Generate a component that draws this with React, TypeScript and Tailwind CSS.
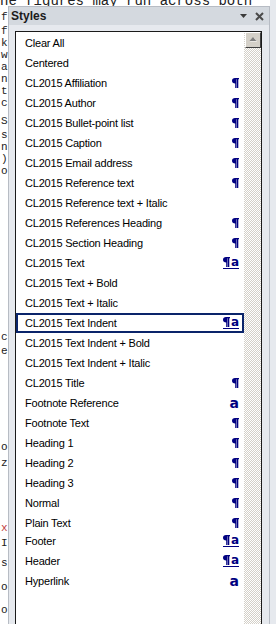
import React from "react";

type Row = { name: string; icon?: "p" | "pa" | "a"; selected?: boolean; tight?: boolean };

const rows: Row[] = [
  { name: "Clear All" },
  { name: "Centered" },
  { name: "CL2015 Affiliation", icon: "p" },
  { name: "CL2015 Author", icon: "p" },
  { name: "CL2015 Bullet-point list", icon: "p" },
  { name: "CL2015 Caption", icon: "p" },
  { name: "CL2015 Email address", icon: "p" },
  { name: "CL2015 Reference text", icon: "p" },
  { name: "CL2015 Reference text + Italic" },
  { name: "CL2015 References Heading", icon: "p" },
  { name: "CL2015 Section Heading", icon: "p" },
  { name: "CL2015 Text", icon: "pa" },
  { name: "CL2015 Text + Bold" },
  { name: "CL2015 Text + Italic" },
  { name: "CL2015 Text Indent", icon: "pa", selected: true },
  { name: "CL2015 Text Indent + Bold" },
  { name: "CL2015 Text Indent + Italic" },
  { name: "CL2015 Title", icon: "p" },
  { name: "Footnote Reference", icon: "a" },
  { name: "Footnote Text", icon: "p" },
  { name: "Heading 1", icon: "p" },
  { name: "Heading 2", icon: "p" },
  { name: "Heading 3", icon: "p" },
  { name: "Normal", icon: "p" },
  { name: "Plain Text", icon: "p" },
  { name: "Footer", icon: "pa", tight: true },
  { name: "Header", icon: "pa" },
  { name: "Hyperlink", icon: "a" },
];

const docLeft: { t: string; y: number; red?: boolean }[] = [
  { t: "f", y: 12 },
  { t: "f", y: 26 },
  { t: "k", y: 38 },
  { t: "w", y: 50 },
  { t: "a", y: 62 },
  { t: "n", y: 74 },
  { t: "t", y: 86 },
  { t: "c", y: 98 },
  { t: "S", y: 116 },
  { t: "s", y: 130 },
  { t: "n", y: 142 },
  { t: ")", y: 154 },
  { t: "o", y: 166 },
  { t: "c", y: 332 },
  { t: "e", y: 346 },
  { t: "o", y: 442 },
  { t: "z", y: 458 },
  { t: "x", y: 523, red: true },
  { t: "I", y: 538 },
  { t: "s", y: 558 },
  { t: "o", y: 582 },
  { t: "o", y: 605 },
];

function Pilcrow() {
  return (
    <svg width="7" height="10" viewBox="0 0 7 10" className="block">
      <path d="M3 0 H7 V1.2 H6.3 V10 H5 V1.2 H4.6 V10 H3.2 V5.6 C1.2 5.6 0 4.6 0 2.8 C0 1 1.2 0 3 0 Z" fill="#000080" />
    </svg>
  );
}

function Icon({ kind }: { kind?: Row["icon"] }) {
  if (!kind) return null;
  if (kind === "p") return <Pilcrow />;
  if (kind === "a")
    return (
      <span
        className="block text-[#000080] font-bold text-[14px] leading-[10px]"
        style={{ fontFamily: '"DejaVu Sans", "Liberation Sans", sans-serif' }}
      >
        a
      </span>
    );
  return (
    <div className="flex flex-col">
      <div className="flex items-end gap-[1px]">
        <Pilcrow />
        <span
          className="block text-[#000080] font-bold text-[12px] leading-[9px]"
          style={{ fontFamily: '"DejaVu Sans", "Liberation Sans", sans-serif' }}
        >
          a
        </span>
      </div>
      <div className="h-[1px] bg-[#000080] mt-[1px]" />
    </div>
  );
}

export default function App() {
  return (
    <div
      className="relative w-[276px] h-[624px] overflow-hidden bg-white"
      style={{ fontFamily: '"Liberation Sans", Arial, sans-serif' }}
    >
      {/* document behind */}
      <div
        className="absolute left-0 top-[-6px] whitespace-nowrap text-[14px] leading-[14px] text-[#222]"
        style={{ fontFamily: '"Liberation Mono", "Courier New", monospace' }}
      >
        ne figures may run across both
      </div>
      {docLeft.map((d, i) => (
        <div
          key={i}
          className={`absolute left-[1px] text-[11px] leading-[10px] ${d.red ? "text-[#c04040]" : "text-[#222]"}`}
          style={{ top: d.y, fontFamily: '"Liberation Mono", "Courier New", monospace' }}
        >
          {d.t}
        </div>
      ))}

      {/* neighbouring frame on the right */}
      <div className="absolute right-0 top-0 bottom-0 w-[6px] bg-[#e6e9ee]" />

      {/* styles panel */}
      <div className="absolute left-[8px] top-[6px] w-[262px] bottom-0 border-l border-t border-r border-[#b7bcc4] bg-[#e6e9ee] flex flex-col">
        <div className="h-[18px] bg-[#d4d9df] flex items-center pl-[2px] pr-[5px]">
          <span className="text-[12px] font-bold text-[#1b1b1b] leading-none">Styles</span>
          <div className="ml-auto flex items-center gap-[8px]">
            <svg width="7" height="4" viewBox="0 0 7 4">
              <path d="M0 0 H7 L3.5 4 Z" fill="#3a3a3a" />
            </svg>
            <svg width="9" height="9" viewBox="0 0 9 9">
              <path d="M1 1 L8 8 M8 1 L1 8" stroke="#4a4a4a" strokeWidth="2" />
            </svg>
          </div>
        </div>
        <div className="flex-1 pl-[6px] pr-[7px] pt-[6px] flex flex-col">
          <div className="flex-1 border border-[#1a1a1a] border-b-0 bg-white flex">
            <div className="flex-1 flex flex-col pt-[1px]">
              {rows.map((r) => (
                <div
                  key={r.name}
                  className={`h-[20px] flex items-center pl-[7px] pr-[3px] border-2 ${
                    r.selected ? "border-[#0a246a]" : "border-transparent"
                  } ${r.tight ? "mt-[-2px]" : ""}`}
                >
                  <span className="text-[11px] text-black leading-none whitespace-nowrap tracking-[-0.2px]">
                    {r.name}
                  </span>
                  <span className="ml-auto">
                    <Icon kind={r.icon} />
                  </span>
                </div>
              ))}
            </div>
            <div className="w-[17px] flex flex-col bg-[repeating-conic-gradient(#d4d0c8_0_25%,#ffffff_0_50%)] bg-[length:2px_2px]">
              <div className="h-[16px] w-[16px] ml-[1px] bg-[#d4d0c8] border-t border-l border-t-white border-l-white border-r border-b border-r-[#404040] border-b-[#404040] flex items-center justify-center">
                <svg width="9" height="6" viewBox="0 0 9 6">
                  <path d="M4.5 0.5 L8 4.5 H1 Z" fill="#ffffff" />
                  <path d="M4 0 L7.5 4 H0.5 Z" fill="#808080" />
                </svg>
              </div>
            </div>
          </div>
        </div>
      </div>
    </div>
  );
}
